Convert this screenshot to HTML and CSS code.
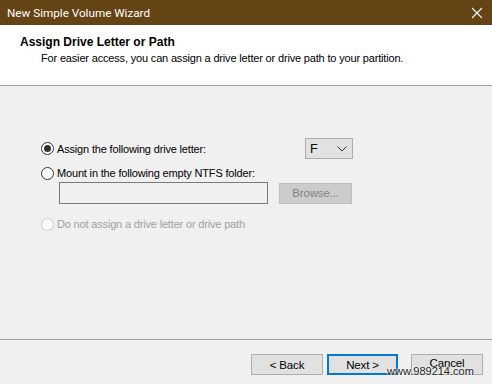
FILE: index.html
```html
<!DOCTYPE html>
<html>
<head>
<meta charset="utf-8">
<link rel="stylesheet" href="styles.css">
</head>
<body>
<div class="window">
  <div class="titlebar">
    <span class="title">New Simple Volume Wizard</span>
    <svg class="close" width="12" height="12" viewBox="0 0 12 12"><path d="M1 1L11 11M11 1L1 11" stroke="#fff" stroke-width="1.1"/></svg>
  </div>
  <div class="header">
    <div class="h-title">Assign Drive Letter or Path</div>
    <div class="h-sub">For easier access, you can assign a drive letter or drive path to your partition.</div>
  </div>
  <div class="content">
    <div class="row row1">
      <label class="opt"><span class="radio checked"></span><span>Assign the following drive letter:</span></label>
      <div class="combo"><span>F</span><svg width="10" height="6" viewBox="0 0 10 6"><path d="M0.5 0.5L5 5L9.5 0.5" fill="none" stroke="#333" stroke-width="1"/></svg></div>
    </div>
    <div class="row row2">
      <label class="opt"><span class="radio"></span><span>Mount in the following empty NTFS folder:</span></label>
    </div>
    <div class="row row-input">
      <div class="textbox"></div>
      <div class="btn disabled browse">Browse...</div>
    </div>
    <div class="row row3">
      <label class="opt disabled"><span class="radio"></span><span>Do not assign a drive letter or drive path</span></label>
    </div>
  </div>
  <div class="footer">
    <div class="btn">&lt; Back</div>
    <div class="btn default">Next &gt;</div>
    <div class="btn cancel"><span class="cancel-label">Cancel</span></div>
    <span class="watermark">www.989214.com</span>
  </div>
</div>
</body>
</html>
```
FILE: styles.css
```css
* { box-sizing: border-box; }
html, body { margin: 0; padding: 0; }
body { width: 492px; height: 384px; overflow: hidden; font-family: "Liberation Sans", Arial, sans-serif; font-size: 11px; letter-spacing: -0.17px; color: #000; }
.window { width: 492px; height: 384px; display: flex; flex-direction: column; background: #f0f0f0; }
.titlebar { height: 25px; background: #644314; display: flex; align-items: center; justify-content: space-between; padding: 0 9px 0 7px; }
.title { color: #fff; font-family: Roboto, "Liberation Sans", sans-serif; font-size: 11.7px; letter-spacing: 0; }
.header { height: 61px; background: #fff; border-bottom: 1px solid #a0a0a0; padding: 10px 0 0 20px; }
.h-title { font-weight: bold; font-size: 12px; line-height: 15px; letter-spacing: 0; }
.h-sub { padding-left: 21px; line-height: 14px; margin-top: 1px; }
.content { height: 254px; padding: 52px 0 0 41px; border-bottom: 1px solid #a0a0a0; }
.row { display: flex; align-items: center; width: 312px; }
.row1 { height: 21px; justify-content: space-between; }
.row2 { height: 16px; margin-top: 6px; }
.row-input { margin-top: 1px; padding-left: 18px; height: 22px; }
.row3 { height: 16px; margin-top: 12px; }
.opt { display: flex; align-items: center; gap: 3px; line-height: 16px; }
.opt.disabled { color: #a0a0a0; }
.radio { width: 13px; height: 13px; border: 1px solid #333; border-radius: 50%; background: #fff; display: flex; align-items: center; justify-content: center; }
.radio.checked::after { content: ""; width: 7px; height: 7px; border-radius: 50%; background: #333; }
.opt.disabled .radio { border-color: #cccccc; background: #fcfcfc; }
.combo { width: 48px; height: 21px; border: 1px solid #adadad; background: #e1e1e1; display: flex; align-items: center; justify-content: space-between; padding: 0 5px 0 4px; font-size: 12.5px; letter-spacing: 0; }
.textbox { width: 209px; height: 22px; border: 1px solid #7a7a7a; background: #f0f0f0; }
.btn { height: 21px; width: 72px; border: 1px solid #adadad; background: #e1e1e1; display: flex; align-items: center; justify-content: center; font-size: 11.5px; }
.btn.disabled { background: #cccccc; border-color: #bfbfbf; color: #838383; }
.browse { margin-left: 11px; width: 73px; height: 21px; }
.footer { flex: 1; position: relative; display: flex; justify-content: flex-end; padding: 14px 9px 0 0; align-items: flex-start; }
.footer .btn + .btn { margin-left: 4px; }
.btn.default { border: 2px solid #0078d7; width: 71px; }
.footer .btn.cancel { margin-left: 13px; align-items: flex-start; padding-top: 2px; }
.cancel-label { line-height: 12px; }
.watermark { position: absolute; left: 387px; top: 25px; font-size: 11px; line-height: 12px; letter-spacing: 0; color: #222; text-shadow: 0 0 2px #fff, 0 0 2px #fff; }
```
